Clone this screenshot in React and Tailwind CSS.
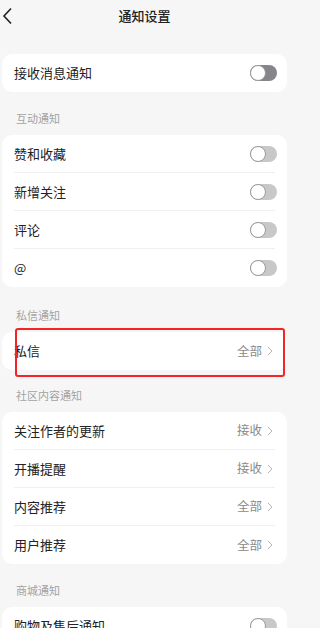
import React from 'react';

const font = { fontFamily: '"Noto Sans CJK SC", "Noto Sans", sans-serif' };

function Toggle({ dark }) {
  return (
    <div className={`relative w-[27px] h-[16px] rounded-full ${dark ? 'bg-[#86858b]' : 'bg-[#c8c8c8]'}`}>
      <div className="absolute left-0 top-0 w-[16px] h-[16px] rounded-full bg-white border border-[#9a9a9a]" />
    </div>
  );
}

function Chevron() {
  return (
    <svg width="6" height="10" viewBox="0 0 6 10" className="ml-[5px]">
      <path d="M1 1l4 4-4 4" fill="none" stroke="#b5b5b5" strokeWidth="1" />
    </svg>
  );
}

function Row({ label, value, dark, divider }) {
  return (
    <div className="px-[12px]">
      <div className={`flex items-center justify-between h-[38px] ${divider ? 'border-b border-[#f0f0f0]' : ''}`}>
        <span className="text-[13px] text-[#222]">{label}</span>
        {value ? (
          <div className="flex items-center mr-[2px]">
            <span className="text-[12.5px] text-[#8a8a8a]">{value}</span>
            <Chevron />
          </div>
        ) : (
          <div className="mr-[-2px]">
            <Toggle dark={dark} />
          </div>
        )}
      </div>
    </div>
  );
}

function Section({ title, pt = 'pt-[18px]' }) {
  return (
    <div className={`${pt} pb-[9px] pl-[14px] h-auto`}>
      <div className="text-[11px] leading-[16px] text-[#a3a3a3]">{title}</div>
    </div>
  );
}

export default function App() {
  return (
    <div className="min-h-screen bg-[#f6f6f6] overflow-hidden" style={font}>
      <div className="w-[289px]">
        {/* 顶部栏 */}
        <div className="relative h-[32px] flex items-center justify-center">
          <svg width="10" height="18" viewBox="0 0 10 18" className="absolute left-[2px] top-[7px]">
            <path d="M9 1.5L2 9l7 7.5" fill="none" stroke="#222" strokeWidth="1.6" />
          </svg>
          <span className="text-[13px] font-medium text-[#222]">通知设置</span>
        </div>

        <div className="ml-[2px] w-[285px]">
          <div className="mt-[22px] bg-white rounded-[10px]">
            <Row label="接收消息通知" dark />
          </div>

          <Section title="互动通知" />
          <div className="bg-white rounded-[10px]">
            <Row label="赞和收藏" divider />
            <Row label="新增关注" divider />
            <Row label="评论" divider />
            <Row label="@" />
          </div>

          <Section title="私信通知" pt="pt-[20px]" />
          <div className="relative bg-white rounded-[10px]">
            <Row label="私信" value="全部" />
            <div className="absolute left-[13px] top-[-4px] w-[270px] h-[49px] border-2 border-[#f52424] rounded-[3px]" />
          </div>

          <Section title="社区内容通知" pt="pt-[17px]" />
          <div className="bg-white rounded-[10px]">
            <Row label="关注作者的更新" value="接收" divider />
            <Row label="开播提醒" value="接收" divider />
            <Row label="内容推荐" value="全部" divider />
            <Row label="用户推荐" value="全部" />
          </div>

          <Section title="商城通知" />
          <div className="bg-white rounded-[10px]">
            <Row label="购物及售后通知" />
          </div>
        </div>
      </div>
    </div>
  );
}
